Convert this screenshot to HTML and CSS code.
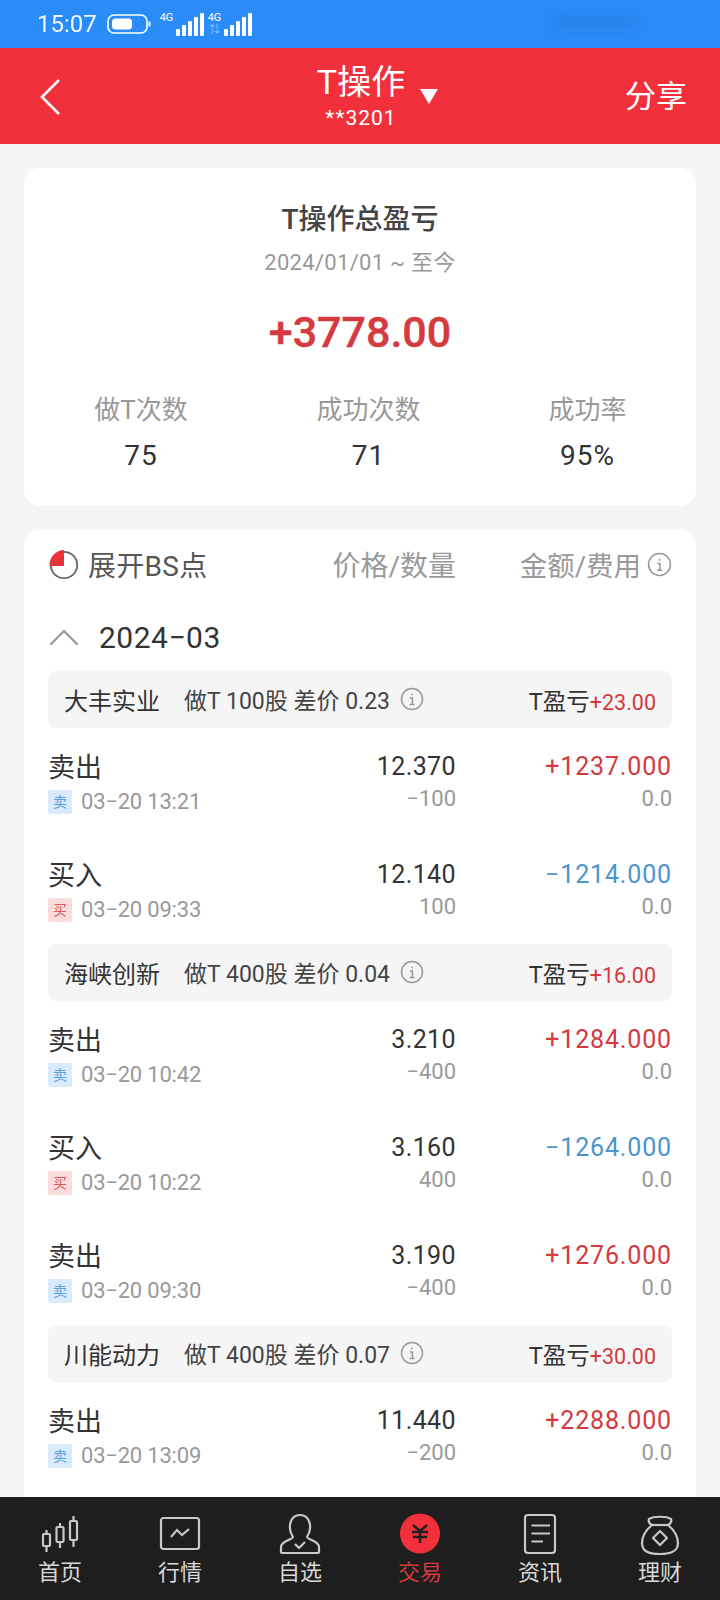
FILE: index.html
```html
<!DOCTYPE html>
<html lang="zh">
<head>
<meta charset="utf-8">
<title>T操作</title>
<link rel="stylesheet" href="styles.css">
</head>
<body>
<div class="app">
  <div class="status">
    <span class="time">15:07</span>
    <svg class="battery" width="44" height="20" viewBox="0 0 44 20"><rect x="1" y="1" width="39" height="18" rx="6" fill="none" stroke="#fff" stroke-width="1.6"/><rect x="5" y="4.500" width="20" height="11" rx="3.500" fill="#fff"/><rect x="41.500" y="7.500" width="2" height="5" rx="1" fill="#fff"/></svg>
    <div class="sig"><div class="sig-label"><span class="four-g">4G</span></div><svg class="bars" width="28" height="23" viewBox="0 0 28 23"><g fill="#fff"><rect x="0" y="16" width="4" height="7" rx="1"/><rect x="6" y="12" width="4" height="11" rx="1"/><rect x="12" y="8" width="4" height="15" rx="1"/><rect x="18" y="4" width="4" height="19" rx="1"/><rect x="24" y="0" width="4" height="23" rx="1"/></g></svg></div>
    <div class="sig"><div class="sig-label"><span class="four-g">4G</span><span class="updown">⇅</span></div><svg class="bars" width="28" height="23" viewBox="0 0 28 23"><g fill="#fff"><rect x="0" y="16" width="4" height="7" rx="1"/><rect x="6" y="12" width="4" height="11" rx="1"/><rect x="12" y="8" width="4" height="15" rx="1"/><rect x="18" y="4" width="4" height="19" rx="1"/><rect x="24" y="0" width="4" height="23" rx="1"/></g></svg></div>
    <span class="smudge"></span>
  </div>

  <header class="head">
    <svg class="back" width="24" height="38" viewBox="0 0 24 38"><path d="M21 2 L4 19 L21 36" fill="none" stroke="#fff" stroke-width="2.6"/></svg>
    <div class="title-wrap">
      <div class="title-text"><div class="title">T操作</div><div class="acct">**3201</div></div>
      <svg class="caret" width="20" height="16" viewBox="0 0 20 16"><path d="M1 1 H19 L10 16 Z" fill="#fff"/></svg>
    </div>
    <div class="share">分享</div>
  </header>

  <main class="content">
    <section class="card summary">
      <div class="sum-title">T操作总盈亏</div>
      <div class="sum-date">2024/01/01 ~ 至今</div>
      <div class="sum-total">+3778.00</div>
      <div class="stats">
        <div class="stat"><div class="stat-label">做T次数</div><div class="stat-val">75</div></div>
        <div class="stat"><div class="stat-label">成功次数</div><div class="stat-val">71</div></div>
        <div class="stat"><div class="stat-label">成功率</div><div class="stat-val">95%</div></div>
      </div>
    </section>

    <section class="card list">
      <div class="list-head">
        <div class="bs"><svg width="30" height="32" viewBox="0 0 30 32"><path d="M15 3.800 A13.200 13.200 0 1 1 1.800 17" fill="none" stroke="#666" stroke-width="1.800"/><path d="M15 2 V18 H0.500 A14.500 15.500 0 0 1 15 2 Z" fill="#e8323c"/></svg><span>展开BS点</span></div>
        <div class="col-price">价格/数量</div>
        <div class="col-amt">金额/费用<svg class="info big" viewBox="0 0 24 24"><circle cx="12" cy="12" r="10.500"/><path d="M12 6.500v1.800M9.800 11H12.400V17.500M9.600 17.500H14.600"/></svg></div>
      </div>
      <div class="month"><svg width="30" height="18" viewBox="0 0 30 18"><path d="M1.500 16.500 L15 3 L28.500 16.500" fill="none" stroke="#999" stroke-width="2.200"/></svg><span>2024−03</span></div>

      <div class="bar"><span class="bar-name">大丰实业</span><span class="bar-info">做T 100股 差价 0.23</span><svg class="info" viewBox="0 0 24 24"><circle cx="12" cy="12" r="10.500"/><path d="M12 6.500v1.800M9.800 11H12.400V17.500M9.600 17.500H14.600"/></svg><span class="bar-pl">T盈亏<em>+23.00</em></span></div>
      <div class="row"><div class="r-left"><div class="r-name">卖出</div><div class="r-time"><span class="tag sell">卖</span>03−20 13:21</div></div><div class="r-mid"><div class="r-price">12.370</div><div class="r-sub">−100</div></div><div class="r-right"><div class="r-amt up">+1237.000</div><div class="r-sub">0.0</div></div></div>
      <div class="row"><div class="r-left"><div class="r-name">买入</div><div class="r-time"><span class="tag buy">买</span>03−20 09:33</div></div><div class="r-mid"><div class="r-price">12.140</div><div class="r-sub">100</div></div><div class="r-right"><div class="r-amt down">−1214.000</div><div class="r-sub">0.0</div></div></div>

      <div class="bar"><span class="bar-name">海峡创新</span><span class="bar-info">做T 400股 差价 0.04</span><svg class="info" viewBox="0 0 24 24"><circle cx="12" cy="12" r="10.500"/><path d="M12 6.500v1.800M9.800 11H12.400V17.500M9.600 17.500H14.600"/></svg><span class="bar-pl">T盈亏<em>+16.00</em></span></div>
      <div class="row"><div class="r-left"><div class="r-name">卖出</div><div class="r-time"><span class="tag sell">卖</span>03−20 10:42</div></div><div class="r-mid"><div class="r-price">3.210</div><div class="r-sub">−400</div></div><div class="r-right"><div class="r-amt up">+1284.000</div><div class="r-sub">0.0</div></div></div>
      <div class="row"><div class="r-left"><div class="r-name">买入</div><div class="r-time"><span class="tag buy">买</span>03−20 10:22</div></div><div class="r-mid"><div class="r-price">3.160</div><div class="r-sub">400</div></div><div class="r-right"><div class="r-amt down">−1264.000</div><div class="r-sub">0.0</div></div></div>
      <div class="row"><div class="r-left"><div class="r-name">卖出</div><div class="r-time"><span class="tag sell">卖</span>03−20 09:30</div></div><div class="r-mid"><div class="r-price">3.190</div><div class="r-sub">−400</div></div><div class="r-right"><div class="r-amt up">+1276.000</div><div class="r-sub">0.0</div></div></div>

      <div class="bar"><span class="bar-name">川能动力</span><span class="bar-info">做T 400股 差价 0.07</span><svg class="info" viewBox="0 0 24 24"><circle cx="12" cy="12" r="10.500"/><path d="M12 6.500v1.800M9.800 11H12.400V17.500M9.600 17.500H14.600"/></svg><span class="bar-pl">T盈亏<em>+30.00</em></span></div>
      <div class="row"><div class="r-left"><div class="r-name">卖出</div><div class="r-time"><span class="tag sell">卖</span>03−20 13:09</div></div><div class="r-mid"><div class="r-price">11.440</div><div class="r-sub">−200</div></div><div class="r-right"><div class="r-amt up">+2288.000</div><div class="r-sub">0.0</div></div></div>
    </section>
  </main>

  <nav class="nav">
    <div class="tab"><svg viewBox="0 0 40 38"><g fill="none" stroke="#c8c8c8" stroke-width="2.200"><rect x="3" y="18" width="7" height="12" rx="1"/><path d="M6.500 14v4M6.500 30v6"/><rect x="16.500" y="11" width="7" height="15" rx="1"/><path d="M20 7v4M20 26v6"/><rect x="30" y="5" width="7" height="19" rx="1"/><path d="M33.500 0v5M33.500 24v7"/></g></svg><span>首页</span></div>
    <div class="tab"><svg viewBox="0 0 40 38"><g fill="none" stroke="#c8c8c8" stroke-width="2.200"><rect x="1" y="2" width="38" height="31" rx="2.500"/><path d="M11 21 L17 14 L22 19 L29 13"/></g></svg><span>行情</span></div>
    <div class="tab"><svg viewBox="0 0 40 38"><g fill="none" stroke="#c8c8c8" stroke-width="2.200" stroke-linejoin="round"><path d="M13 21 C7 12 10 -1 20 -1 C30 -1 33 12 27 21 C28 24 39 25 39 31 V36 Q39 37 38 37 H2 Q1 37 1 36 V31 C1 25 12 24 13 21 Z"/><path d="M15 28 L19 32 L25 26"/></g></svg><span>自选</span></div>
    <div class="tab active"><svg viewBox="0 0 40 38"><circle cx="20" cy="17.500" r="20" fill="#f2303c"/><g fill="none" stroke="#1e1e1e" stroke-width="2.400"><path d="M13 9 L20 15 L27 9"/><path d="M20 15 V27 M12 16 H28 M13 21 H27"/></g></svg><span>交易</span></div>
    <div class="tab"><svg viewBox="0 0 40 38"><g fill="none" stroke="#c8c8c8" stroke-width="2.200"><rect x="5" y="-1" width="30" height="38" rx="3"/><path d="M11.500 9.500H30M11.500 17.500H30M11.500 25.500H23"/></g></svg><span>资讯</span></div>
    <div class="tab"><svg viewBox="0 0 40 38"><g fill="none" stroke="#c8c8c8" stroke-width="2.200" stroke-linejoin="round"><path d="M9 3 C13 0 27 0 31 3 C32 6 30 8 28 9 C34 14 38 20 38 27 C38 35 32 38 20 38 C8 38 2 35 2 27 C2 20 6 14 12 9 C10 8 8 6 9 3 Z"/><path d="M12 9 H28"/><path d="M20 15 L27 22 L20 29 L13 22 Z"/></g></svg><span>理财</span></div>
  </nav>
</div>
</body>
</html>
```
FILE: styles.css
```css
* { box-sizing: border-box; }
html, body { margin: 0; padding: 0; }
body {
  width: 720px;
  height: 1600px;
  overflow: hidden;
  background: #f5f5f5;
  font-family: Roboto, "Noto Sans CJK SC", sans-serif;
  color: #333;
}
.app { display: flex; flex-direction: column; height: 1600px; }

.status {
  height: 48px;
  flex: none;
  background: #2a8cf8;
  display: flex;
  align-items: center;
  padding-left: 37px;
  color: #fff;
}
.time { font-size: 24px; line-height: 48px; width: 60px; opacity: .92; }
.battery { margin-left: 10px; flex: none; }
.sig { display: flex; gap: 2px; height: 23px; margin-left: 8px; margin-top: 1px; }
.sig + .sig { margin-left: 3px; }
.sig-label { display: flex; flex-direction: column; align-items: center; width: 15px; }
.four-g { font-size: 11px; line-height: 10px; }
.updown { font-size: 11px; line-height: 13px; color: #8cc4ff; }
.bars { flex: none; }
.smudge {
  margin-left: 298px;
  width: 88px;
  height: 14px;
  border-radius: 7px;
  background: #2270cc;
  filter: blur(7px);
  opacity: .4;
  margin-top: -2px;
}

.head {
  height: 96px;
  flex: none;
  background: #f2303c;
  display: grid;
  grid-template-columns: 1fr auto 1fr;
  align-items: center;
  color: #fff;
  padding: 0 33px 0 38px;
}
.back { margin-top: 2px; }
.title-wrap { display: flex; align-items: center; gap: 14px; margin-left: 31px; }
.title-text { text-align: center; margin-top: -2px; }
.title { font-size: 34px; line-height: 42px; }
.acct { font-size: 21px; line-height: 24px; margin-top: 3px; letter-spacing: 1px; }
.caret { margin-top: 0; }
.share { font-size: 31px; line-height: 40px; text-align: right; margin-top: 2px; }

.content { flex: 1; min-height: 0; overflow: hidden; padding: 24px 24px 0; display: flex; flex-direction: column; gap: 23px; }
.card { background: #fff; border-radius: 16px; flex: none; }

.summary { height: 338px; padding-top: 33px; text-align: center; }
.sum-title { font-size: 28px; line-height: 38px; font-weight: 500; color: #444; }
.sum-date { font-size: 22px; line-height: 28px; letter-spacing: .3px; color: #999; margin-top: 10px; }
.sum-total { font-size: 43px; line-height: 56px; font-weight: 500; -webkit-text-stroke: .4px #d43a40; color: #d43a40; margin-top: 27px; }
.stats { display: grid; grid-template-columns: 234px 221px 1fr; margin-top: 32px; }
.stat-label { font-size: 26px; line-height: 36px; color: #999; }
.stat-val { font-size: 28px; line-height: 36px; letter-spacing: 1px; color: #333; margin-top: 10px; }

.list { padding: 0 24px; min-height: 1000px; }
.list-head { height: 70px; display: flex; align-items: center; }
.bs { display: flex; align-items: center; gap: 9px; width: 232px; font-size: 28px; letter-spacing: .3px; color: #555; margin-left: 1px; }
.col-price { width: 175px; text-align: right; font-size: 28px; color: #999; flex: none; }
.col-amt { flex: 1; display: flex; justify-content: flex-end; align-items: center; gap: 6px; font-size: 27.500px; color: #999; }
.info { width: 24px; height: 24px; fill: none; stroke: #999; stroke-width: 1.500; flex: none; }
.info.big { width: 25px; height: 25px; }

.month { height: 72px; display: flex; align-items: center; gap: 20px; font-size: 30px; color: #333; letter-spacing: .5px; padding-left: 1px; padding-top: 4px; }

.bar { height: 57px; background: #f5f5f5; border-radius: 8px; display: flex; align-items: center; padding: 0 16px; font-size: 24px; color: #333; }
.bar-name { width: 120px; }
.bar-info { color: #444; font-size: 23px; margin-top: -1px; }
.bar .info { margin-left: 10px; margin-top: -2px; }
.bar-pl { margin-left: auto; font-size: 23.500px; }
.bar-pl em { font-style: normal; color: #d23a40; font-size: 21.500px; }

.row { height: 108px; display: flex; padding-top: 20px; }
.r-left { width: 219px; }
.r-name { font-size: 27px; line-height: 40px; color: #333; }
.r-time { display: flex; align-items: center; gap: 9px; font-size: 22px; letter-spacing: -.2px; line-height: 30px; color: #999; margin-top: -1px; }
.tag { width: 24px; height: 24px; font-size: 14px; line-height: 24px; text-align: center; border-radius: 2px; letter-spacing: 0; }
.tag.sell { background: #d8eafb; color: #5a9fe0; }
.tag.buy { background: #fbdcdc; color: #e2555c; }
.r-mid { width: 189px; text-align: right; }
.r-right { flex: 1; text-align: right; }
.r-price, .r-amt { font-size: 25px; line-height: 40px; margin-top: -1px; }
.r-price { letter-spacing: .4px; color: #333; }
.r-amt { letter-spacing: .85px; }
.r-sub { font-size: 22px; line-height: 30px; color: #999; margin-top: -3px; }
.up { color: #d23a40; }
.down { color: #4a94d0; }

.nav {
  height: 103px;
  flex: none;
  background: #1e1e1e;
  display: grid;
  grid-template-columns: repeat(6, 1fr);
}
.tab { display: flex; flex-direction: column; align-items: center; padding-top: 19px; color: #d8d8d8; }
.tab svg { width: 40px; height: 38px; overflow: visible; flex: none; }
.tab span { font-size: 22px; line-height: 30px; margin-top: 4px; }
.tab.active { color: #d23a40; }
```
